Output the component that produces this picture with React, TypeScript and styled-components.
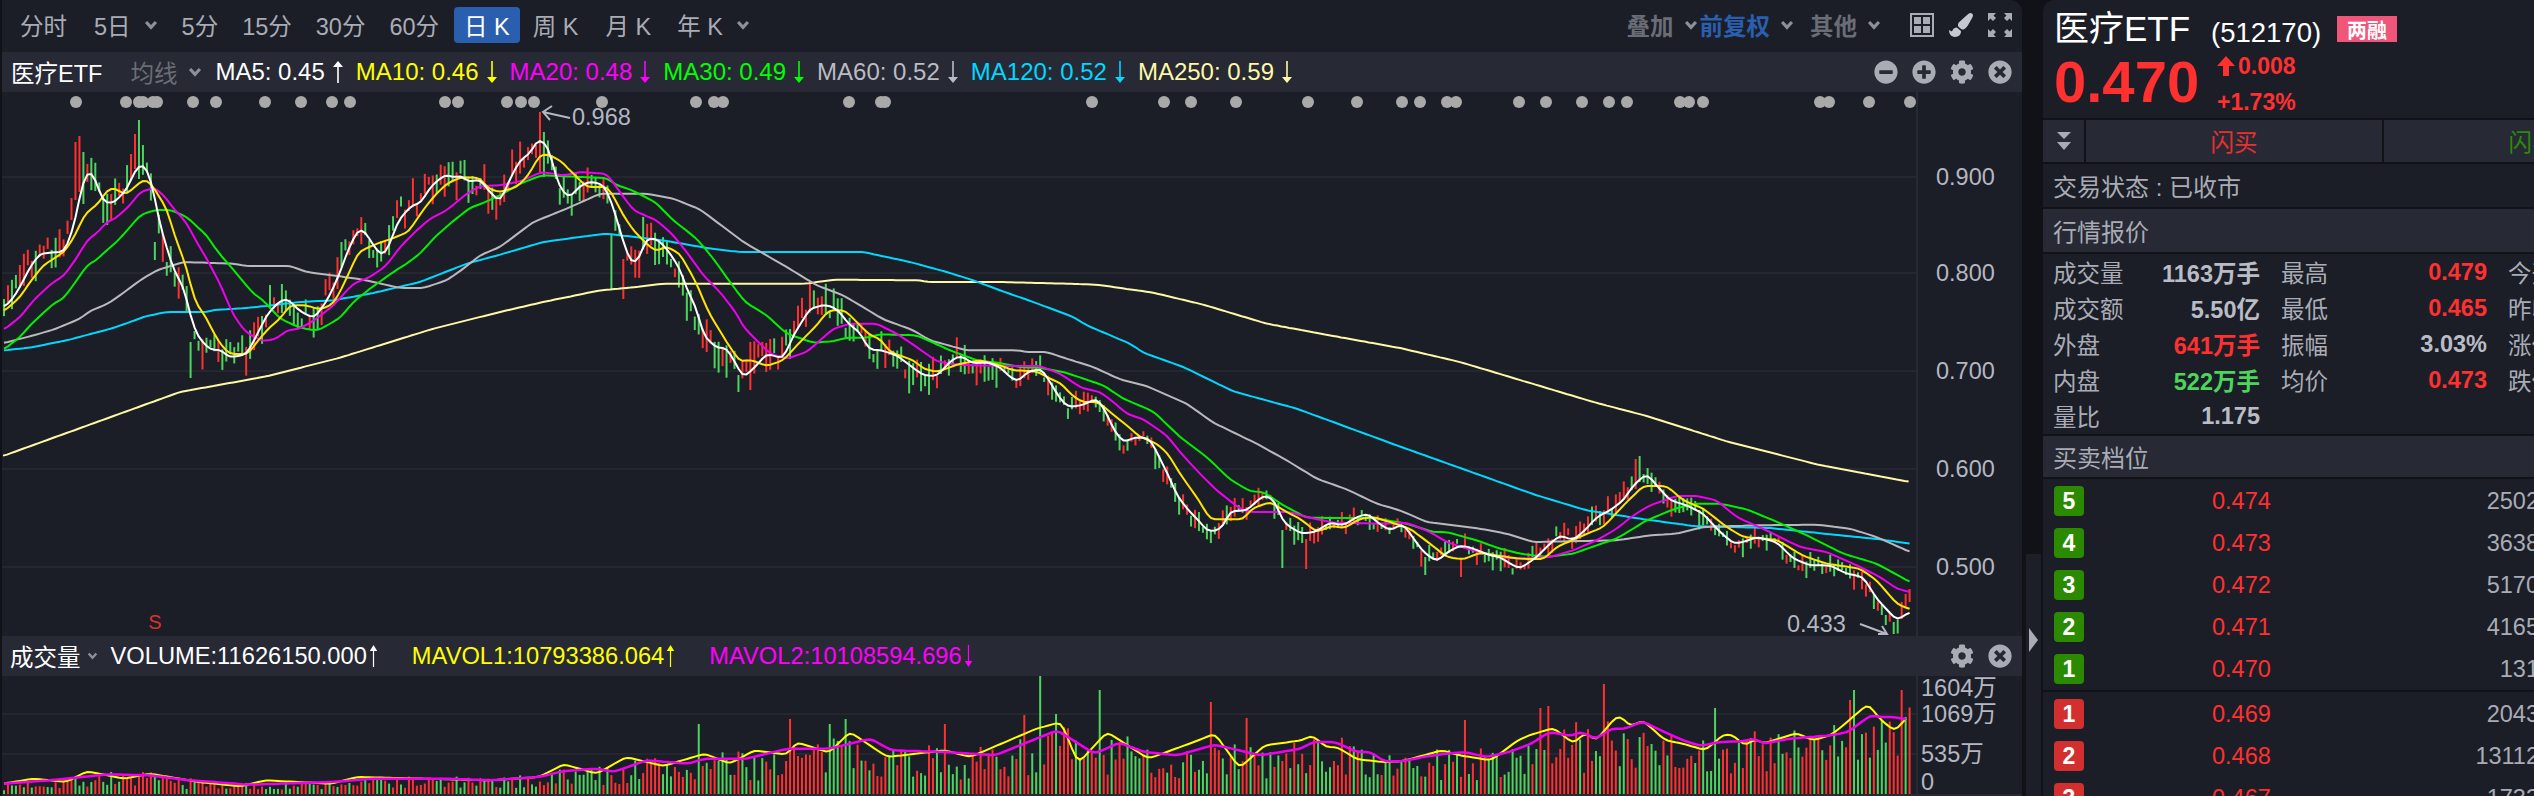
import React from 'react';
import styled, {createGlobalStyle} from 'styled-components';
import {FaCog, FaMinusCircle, FaPaintBrush, FaPlusCircle, FaTimesCircle} from 'react-icons/fa';

type Pt = [number, number];

const RED = '#ff3030';
const GREEN = '#4cd45c';
const MUTED = '#a9acb5';
const PANEL = '#1b1e27';
const BAR = '#272934';
const STEP = 3.97;

// traced from the reference, one list of points per crop of the chart
const cropA = (p: number[]) => toPts(p, (x) => x / 3, (y) => 90 + y / 3, 0, 500);
const cropB = (p: number[]) => toPts(p, (x) => 500 + x / 3, (y) => 90 + y / 3, 500, 1000);
const cropC = (p: number[]) => toPts(p, (x) => 1000 + x / 3, (y) => 280 + y / 3, 1000, 1500);
const cropD = (p: number[]) => toPts(p, (x) => 1450 + x / 3, (y) => 400 + y / 3, 1500, 1920);
const cropV = (p: number[]) => toPts(p, (x) => x / 1.206, (y) => 560 + y / 3, 0, 1300);
const cropW = (p: number[]) => toPts(p, (x) => 1250 + x / 2.24, (y) => 670 + y / 3, 1300, 1920);

function toPts(p: number[], fx: (n: number) => number, fy: (n: number) => number, from: number, to: number): Pt[] {
    const out: Pt[] = [];
    for (let i = 0; i < p.length; i += 2) {
        const x = fx(p[i]);
        if (x >= from && x < to) {
            out.push([x, fy(p[i + 1])]);
        }
    }
    return out;
}

function at(pts: Pt[], x: number): number {
    if (x <= pts[0][0]) {
        return pts[0][1];
    }
    for (let i = 1; i < pts.length; i++) {
        if (x <= pts[i][0]) {
            const [x0, y0] = pts[i - 1];
            const [x1, y1] = pts[i];
            return y0 + ((y1 - y0) * (x - x0)) / (x1 - x0);
        }
    }
    return pts[pts.length - 1][1];
}

function smooth(pts: Pt[]): string {
    const start = pts[0][0];
    const end = pts[pts.length - 1][0];
    const out: string[] = [];
    for (let x = start; x <= end; x += STEP) {
        const y = (at(pts, x - STEP) + at(pts, x) * 2 + at(pts, x + STEP)) / 4;
        out.push(`${x.toFixed(1)},${y.toFixed(1)}`);
    }
    return out.join(' ');
}

const ma5: Pt[] = [
    ...cropA([12, 645, 35, 625, 60, 585, 90, 525, 120, 485, 170, 480, 195, 480, 225, 390, 245, 280, 262, 240, 282, 245, 305, 325, 335, 335, 355, 320, 385, 285, 405, 235, 425, 215, 445, 235, 465, 320, 480, 400, 510, 500, 535, 565, 550, 575, 565, 650, 590, 730, 630, 773, 665, 773, 685, 797, 740, 787, 770, 730, 800, 670, 830, 635, 860, 618, 900, 658, 940, 678, 965, 650, 995, 600, 1020, 540, 1050, 460, 1075, 412, 1090, 412, 1140, 490, 1160, 480, 1195, 385, 1235, 340, 1260, 335, 1295, 280, 1340, 245, 1360, 258, 1385, 250, 1405, 270, 1440, 262, 1465, 295]),
    ...cropB([0, 330, 30, 260, 60, 205, 90, 185, 115, 138, 145, 165, 175, 280, 208, 320, 235, 285, 270, 268, 310, 278, 335, 330, 355, 400, 380, 480, 395, 515, 420, 500, 435, 440, 470, 440, 500, 470, 540, 530, 560, 590, 590, 650, 610, 730, 650, 768, 680, 768, 710, 820, 730, 858, 770, 820, 800, 785, 850, 800, 880, 730, 930, 650, 975, 638, 1010, 650, 1050, 700, 1080, 720, 1105, 772, 1145, 775, 1190, 790, 1230, 820, 1270, 850, 1310, 852, 1360, 800, 1385, 792, 1420, 815, 1460, 810]),
    ...cropC([0, 255, 30, 285, 55, 300, 80, 270, 125, 260, 150, 300, 180, 350, 205, 375, 245, 370, 290, 350, 310, 375, 345, 450, 370, 480, 410, 465, 450, 470, 480, 530, 510, 590, 530, 640, 570, 690, 600, 720, 625, 750, 665, 740, 690, 688, 740, 685, 790, 640, 820, 650, 850, 720, 870, 735, 905, 755, 945, 750, 990, 722, 1030, 730, 1070, 705, 1105, 695, 1130, 720, 1170, 745, 1210, 725, 1230, 755, 1270, 810, 1310, 838, 1350, 805, 1385, 790, 1420, 800, 1470, 820]),
    ...cropD([150, 465, 180, 485, 210, 500, 260, 465, 300, 425, 330, 400, 370, 415, 410, 380, 440, 345, 480, 325, 520, 295, 550, 250, 590, 215, 620, 250, 660, 295, 710, 310, 760, 335, 800, 380, 850, 425, 880, 420, 920, 405, 980, 420, 1030, 470, 1080, 490, 1140, 490, 1190, 515, 1240, 525, 1280, 590, 1340, 655, 1380, 630]),
];

const ma10: Pt[] = [
    ...cropA([12, 658, 60, 615, 90, 570, 130, 520, 195, 478, 225, 430, 255, 365, 295, 335, 320, 295, 345, 288, 375, 310, 410, 280, 430, 263, 450, 270, 500, 350, 530, 450, 555, 510, 585, 630, 615, 670, 650, 740, 685, 785, 745, 787, 770, 750, 810, 705, 840, 680, 870, 640, 920, 640, 960, 653, 1000, 635, 1030, 580, 1075, 480, 1130, 455, 1170, 442, 1225, 420, 1265, 360, 1300, 315, 1340, 275, 1385, 255, 1440, 258, 1465, 290]),
    ...cropB([0, 300, 50, 285, 85, 250, 120, 188, 145, 188, 180, 205, 225, 250, 260, 285, 325, 285, 370, 370, 400, 415, 440, 455, 470, 480, 495, 462, 540, 485, 590, 575, 625, 660, 680, 750, 720, 810, 750, 803, 800, 822, 850, 805, 900, 750, 950, 700, 985, 655, 1035, 655, 1070, 690, 1110, 730, 1140, 740, 1170, 780, 1240, 805, 1270, 830, 1310, 840, 1380, 815, 1440, 805]),
    ...cropC([0, 250, 40, 265, 110, 268, 150, 290, 185, 305, 210, 335, 245, 360, 295, 360, 330, 390, 380, 430, 420, 465, 465, 482, 500, 510, 540, 575, 600, 660, 630, 712, 730, 712, 755, 680, 810, 660, 860, 690, 900, 710, 950, 750, 1000, 730, 1030, 740, 1080, 710, 1120, 705, 1170, 720, 1230, 740, 1290, 785, 1340, 825, 1390, 832, 1440, 812]),
    ...cropD([150, 462, 210, 470, 280, 472, 320, 435, 400, 400, 460, 375, 530, 300, 580, 252, 650, 252, 700, 295, 760, 320, 830, 375, 880, 405, 980, 413, 1060, 462, 1130, 485, 1230, 500, 1280, 535, 1340, 605, 1380, 622]),
];

const ma20: Pt[] = [
    ...cropA([12, 713, 60, 675, 105, 620, 160, 570, 190, 553, 225, 505, 265, 440, 290, 425, 320, 390, 345, 380, 390, 340, 420, 300, 465, 287, 500, 320, 520, 350, 555, 385, 590, 450, 620, 500, 660, 575, 700, 670, 740, 723, 790, 748, 830, 740, 860, 715, 900, 710, 950, 680, 1000, 640, 1060, 575, 1110, 555, 1160, 520, 1200, 465, 1250, 415, 1290, 380, 1340, 355, 1400, 305, 1440, 282]),
    ...cropB([0, 280, 60, 268, 125, 240, 190, 250, 240, 240, 320, 245, 360, 300, 400, 355, 470, 385, 520, 430, 560, 480, 610, 550, 660, 600, 710, 665, 730, 705, 770, 745, 810, 785, 860, 800, 920, 780, 960, 745, 1000, 710, 1050, 695, 1130, 695, 1190, 725, 1250, 765, 1310, 808, 1370, 818]),
    ...cropC([0, 252, 120, 252, 180, 275, 245, 318, 300, 330, 340, 360, 380, 395, 430, 412, 500, 460, 540, 510, 590, 565, 650, 625, 720, 680, 750, 690, 870, 690, 920, 705, 1000, 722, 1150, 725, 1220, 722, 1290, 750, 1340, 780, 1400, 800]),
    ...cropD([150, 465, 210, 470, 300, 465, 370, 445, 440, 415, 500, 380, 550, 340, 600, 310, 680, 282, 740, 282, 800, 295, 860, 345, 960, 390, 1050, 435, 1130, 450, 1220, 490, 1290, 525, 1340, 560, 1380, 570]),
];

const ma30: Pt[] = [
    ...cropA([12, 772, 60, 735, 90, 700, 160, 635, 190, 620, 230, 565, 265, 515, 285, 508, 320, 475, 350, 450, 390, 405, 420, 370, 460, 355, 510, 353, 560, 375, 620, 430, 650, 475, 710, 545, 760, 605, 790, 625, 840, 680, 890, 703, 925, 713, 955, 715, 1020, 678, 1060, 630, 1110, 590, 1180, 540, 1220, 515, 1260, 485, 1300, 440, 1350, 395, 1410, 347, 1440, 337]),
    ...cropB([0, 310, 60, 275, 125, 250, 320, 258, 350, 280, 390, 292, 465, 330, 520, 385, 590, 440, 640, 500, 690, 570, 735, 630, 800, 670, 860, 725, 940, 752, 1000, 748, 1040, 737, 1100, 737, 1140, 727, 1250, 730, 1350, 775, 1430, 805]),
    ...cropC([0, 243, 60, 255, 125, 258, 190, 270, 230, 283, 280, 300, 310, 310, 370, 350, 460, 388, 540, 465, 620, 525, 690, 592, 750, 628, 790, 630, 850, 670, 920, 707, 1010, 708, 1120, 708, 1220, 725, 1300, 750, 1340, 750, 1430, 775]),
    ...cropD([150, 440, 210, 455, 290, 465, 370, 455, 440, 430, 500, 410, 590, 355, 680, 318, 740, 305, 810, 305, 890, 322, 970, 355, 1060, 395, 1180, 455, 1280, 485, 1380, 540]),
];

const ma60: Pt[] = [
    ...cropA([12, 753, 90, 733, 160, 713, 240, 680, 270, 657, 320, 637, 360, 610, 420, 565, 470, 535, 550, 510, 700, 515, 740, 522, 870, 522, 920, 540, 960, 545, 1090, 563, 1200, 588, 1270, 588, 1340, 565, 1390, 530, 1440, 490]),
    ...cropB([0, 465, 100, 390, 200, 350, 300, 305, 440, 305, 520, 320, 600, 352, 730, 450, 860, 525, 950, 580, 1030, 610, 1150, 682, 1240, 715, 1290, 745, 1400, 775]),
    ...cropC([0, 205, 60, 205, 70, 210, 140, 210, 200, 230, 280, 255, 360, 292, 440, 312, 560, 365, 640, 422, 770, 485, 860, 535, 950, 590, 1040, 622, 1130, 665, 1200, 685, 1280, 720, 1440, 740]),
    ...cropD([170, 395, 250, 420, 500, 415, 600, 400, 680, 395, 760, 375, 920, 370, 1100, 368, 1200, 380, 1280, 405, 1380, 450]),
];

const ma120: Pt[] = [
    ...cropA([12, 775, 90, 767, 200, 745, 340, 708, 440, 672, 500, 660, 620, 660, 640, 654, 750, 647, 900, 630, 1000, 625, 1120, 603, 1260, 570, 1400, 515]),
    ...cropB([0, 488, 130, 450, 240, 435, 320, 425, 420, 437, 500, 447, 620, 468, 720, 480, 1090, 480, 1230, 510, 1340, 540, 1420, 565]),
    ...cropC([0, 25, 100, 60, 220, 105, 260, 130, 390, 185, 430, 212, 550, 255, 700, 328, 890, 380, 1190, 490]),
    ...cropD([260, 280, 410, 325, 570, 350, 730, 372, 960, 378, 1170, 400, 1290, 412, 1380, 425]),
];

const ma250: Pt[] = [
    ...cropA([9, 1092, 540, 900, 800, 853, 1020, 797, 1300, 710]),
    ...cropB([0, 660, 130, 630, 300, 595, 410, 585, 490, 575, 920, 575, 1000, 563, 1260, 565, 1280, 570]),
    ...cropC([0, 0, 200, 5, 290, 8, 460, 32, 610, 68, 800, 125, 1000, 162, 1200, 198, 1380, 240]),
    ...cropD([430, 0, 590, 42, 830, 118, 1100, 187, 1380, 240]),
];

const maLines: {color: string; pts: Pt[]}[] = [
    {color: '#fff8a6', pts: ma250},
    {color: '#00d8ff', pts: ma120},
    {color: '#b9b9bd', pts: ma60},
    {color: '#00f000', pts: ma30},
    {color: '#f000f0', pts: ma20},
    {color: '#ffe600', pts: ma10},
    {color: '#ffffff', pts: ma5},
];

const volMa1: Pt[] = [
    ...cropV([5, 665, 40, 650, 80, 660, 105, 628, 150, 650, 180, 635, 240, 660, 290, 673, 320, 655, 400, 665, 430, 645, 590, 655, 650, 645, 680, 607, 720, 635, 755, 585, 800, 612, 850, 575, 880, 605, 910, 565, 950, 578, 960, 540, 1000, 572, 1025, 510, 1070, 585, 1140, 565, 1170, 585, 1250, 500, 1280, 480, 1300, 605, 1335, 510, 1385, 590, 1440, 540, 1465, 515, 1495, 618, 1525, 550, 1568, 545]),
    ...cropW([115, 205, 140, 190, 170, 225, 195, 225, 240, 262, 300, 270, 340, 268, 430, 235, 470, 250, 540, 265, 600, 205, 625, 190, 680, 168, 725, 215, 750, 182, 775, 205, 820, 135, 835, 135, 850, 165, 880, 145, 930, 205, 970, 215, 1020, 235, 1060, 188, 1080, 188, 1110, 222, 1130, 200, 1150, 215, 1225, 183, 1260, 205, 1300, 190, 1320, 170, 1385, 95, 1410, 140, 1445, 178, 1475, 130]),
];

const volMa2: Pt[] = [
    ...cropV([5, 665, 60, 655, 130, 637, 180, 640, 230, 655, 300, 668, 400, 660, 450, 650, 540, 650, 590, 655, 650, 645, 680, 627, 720, 620, 740, 630, 780, 595, 830, 605, 850, 590, 900, 590, 950, 560, 1000, 560, 1050, 530, 1075, 565, 1140, 570, 1200, 580, 1250, 530, 1275, 505, 1320, 575, 1350, 542, 1380, 570, 1420, 580, 1465, 548, 1520, 580, 1568, 565]),
    ...cropW([115, 230, 140, 210, 190, 210, 240, 240, 270, 240, 300, 268, 340, 268, 400, 252, 440, 245, 480, 240, 530, 255, 580, 240, 630, 215, 670, 180, 720, 192, 740, 180, 775, 200, 810, 170, 840, 170, 880, 148, 920, 175, 970, 205, 1010, 222, 1050, 210, 1100, 208, 1130, 200, 1150, 215, 1210, 200, 1300, 190, 1340, 180, 1390, 130, 1410, 135, 1440, 135, 1475, 143]),
];

function makeRandom(seed: number) {
    let s = seed;
    return () => {
        s = (s + 0x6d2b79f5) | 0;
        let t = Math.imul(s ^ (s >>> 15), 1 | s);
        t = (t + Math.imul(t ^ (t >>> 7), 61 | t)) ^ t;
        return ((t ^ (t >>> 14)) >>> 0) / 4294967296;
    };
}

interface Bar {
    x: number;
    top: number;
    bottom: number;
    up: boolean;
}

const priceSpikes: Bar[] = [
    {x: 70, top: 196, bottom: 218, up: true},
    {x: 76, top: 140, bottom: 198, up: true},
    {x: 80, top: 134, bottom: 190, up: true},
    {x: 84, top: 150, bottom: 202, up: false},
    {x: 130, top: 152, bottom: 177, up: true},
    {x: 134, top: 132, bottom: 167, up: true},
    {x: 138, top: 118, bottom: 177, up: false},
    {x: 156, top: 240, bottom: 258, up: false},
    {x: 192, top: 340, bottom: 376, up: false},
    {x: 538, top: 110, bottom: 170, up: true},
    {x: 542, top: 130, bottom: 175, up: false},
    {x: 613, top: 233, bottom: 288, up: false},
    {x: 624, top: 257, bottom: 297, up: true},
    {x: 739, top: 373, bottom: 390, up: false},
    {x: 750, top: 340, bottom: 388, up: true},
    {x: 1284, top: 528, bottom: 566, up: false},
    {x: 1306, top: 537, bottom: 567, up: true},
    {x: 1424, top: 555, bottom: 573, up: false},
    {x: 1460, top: 557, bottom: 575, up: true},
    {x: 1634, top: 457, bottom: 487, up: true},
    {x: 1640, top: 454, bottom: 480, up: false},
    {x: 1874, top: 592, bottom: 607, up: false},
    {x: 1882, top: 603, bottom: 613, up: false},
    {x: 1887, top: 613, bottom: 623, up: false},
    {x: 1892, top: 620, bottom: 632, up: false},
    {x: 1900, top: 600, bottom: 617, up: true},
    {x: 1904, top: 592, bottom: 605, up: true},
    {x: 1910, top: 587, bottom: 600, up: true},
];

const volumeSpikes: {x: number; top: number; up: boolean}[] = [
    {x: 699, top: 722, up: false},
    {x: 789, top: 717, up: true},
    {x: 829, top: 722, up: false},
    {x: 846, top: 717, up: false},
    {x: 945, top: 722, up: true},
    {x: 1024, top: 713, up: true},
    {x: 1042, top: 674, up: false},
    {x: 1057, top: 712, up: false},
    {x: 1100, top: 688, up: false},
    {x: 1212, top: 700, up: true},
    {x: 1248, top: 716, up: true},
    {x: 1463, top: 718, up: true},
    {x: 1539, top: 706, up: true},
    {x: 1549, top: 704, up: true},
    {x: 1604, top: 682, up: true},
    {x: 1716, top: 706, up: false},
    {x: 1850, top: 698, up: true},
    {x: 1856, top: 688, up: false},
    {x: 1900, top: 688, up: true},
];

function buildCandles(): Bar[] {
    const rnd = makeRandom(20);
    const bars: Bar[] = [];
    for (let x = 4; x < 1912; x += STEP) {
        const spike = priceSpikes.find((s) => Math.abs(s.x - x) < STEP / 2);
        if (spike) {
            bars.push({...spike, x});
            continue;
        }
        const slope = at(ma5, x + 10) - at(ma5, x - 10);
        const up = rnd() < (slope < 0 ? 0.7 : 0.28);
        const vol = x < 1000 ? 1 : 0.6;
        const len = (7 + rnd() * 26) * vol;
        const mid = at(ma5, x) + (rnd() - 0.5) * 22 * vol + slope * 0.15;
        bars.push({x, top: mid - len / 2, bottom: mid + len / 2, up});
    }
    return bars;
}

function buildVolume(): Bar[] {
    const rnd = makeRandom(7);
    const bars: Bar[] = [];
    for (let x = 4; x < 1912; x += STEP) {
        const spike = volumeSpikes.find((s) => Math.abs(s.x - x) < STEP / 2);
        if (spike) {
            bars.push({x, top: spike.top, bottom: 792, up: spike.up});
            continue;
        }
        const height = (792 - at(volMa2, x)) * (0.35 + rnd() * 0.85);
        bars.push({x, top: 792 - height, bottom: 792, up: rnd() > 0.5});
    }
    return bars;
}

const candles = buildCandles();
const volumeBars = buildVolume();

const signalDots = [76, 126, 139, 143, 153, 157, 193, 216, 265, 301, 332, 350, 445, 458, 507, 521, 534, 602, 696, 714, 723, 849, 881, 885, 1092, 1164, 1191, 1236, 1308, 1357, 1402, 1420, 1447, 1456, 1519, 1546, 1582, 1609, 1627, 1680, 1689, 1703, 1820, 1829, 1869, 1910];
const priceGrid = [{y: 175, label: '0.900'}, {y: 271, label: '0.800'}, {y: 369, label: '0.700'}, {y: 467, label: '0.600'}, {y: 565, label: '0.500'}];
const volumeAxis = [{y: 686, label: '1604万'}, {y: 712, label: '1069万'}, {y: 752, label: '535万'}, {y: 780, label: '0'}];

const GlobalStyle = createGlobalStyle`
    html, body {
        margin: 0;
        height: 100%;
        overflow: hidden;
        background: #111217;
    }
    body {
        font-family: "Liberation Sans", "Noto Sans CJK SC", sans-serif;
    }
`;

const Page = styled.div`
    display: flex;
    width: 2534px;
    height: 796px;
    overflow: hidden;
    padding-left: 2px;
    box-sizing: border-box;
`;

const ChartPanel = styled.section`
    flex: 0 0 2020px;
    display: flex;
    flex-direction: column;
    height: 796px;
    background: ${PANEL};
    border-top-right-radius: 12px;
    overflow: hidden;
`;

const Toolbar = styled.nav`
    flex: 0 0 50px;
    display: flex;
    align-items: center;
    padding: 0 10px 2px 18px;
    font-size: 23.5px;
    color: ${MUTED};
`;

const ToolItem = styled.span<{$active?: boolean; $tone?: string; $space?: number}>`
    display: inline-flex;
    align-items: center;
    justify-content: center;
    gap: ${(p) => (p.$tone ? 10 : 13)}px;
    height: 36px;
    padding: ${(p) => (p.$active ? '0 10px' : '0')};
    margin-right: ${(p) => p.$space ?? 24}px;
    border-radius: 4px;
    background: ${(p) => (p.$active ? '#2a5fb0' : 'transparent')};
    color: ${(p) => (p.$active ? '#ffffff' : p.$tone ?? MUTED)};
    white-space: pre;
    font-weight: ${(p) => (p.$tone ? 700 : 400)};
`;

const ToolSpacer = styled.span`
    flex: 1;
`;

const IconSlot = styled.span<{$space?: number; $color?: string}>`
    display: inline-flex;
    margin-right: ${(p) => p.$space ?? 15}px;
    color: ${(p) => p.$color ?? MUTED};
`;

const Legend = styled.div`
    flex: 0 0 40px;
    display: flex;
    align-items: center;
    padding: 0 10px 0 9px;
    background: ${BAR};
    font-size: 23.5px;
    white-space: pre;
`;

const LegendTitle = styled.span<{$space?: number; $inset?: number}>`
    color: #ffffff;
    margin-left: ${(p) => p.$inset ?? 0}px;
    margin-right: ${(p) => p.$space ?? 28}px;
`;

const LegendPick = styled.span<{$width: number}>`
    display: inline-flex;
    align-items: center;
    gap: 11px;
    width: ${(p) => p.$width}px;
    color: #6a6d76;
`;

const LegendValue = styled.span<{$color: string; $space: number; $size: number}>`
    display: inline-flex;
    align-items: center;
    color: ${(p) => p.$color};
    font-size: ${(p) => p.$size}px;
    margin-right: ${(p) => p.$space}px;
`;

const TrendMark = styled.svg<{$gap: number}>`
    flex: none;
    margin-left: ${(p) => p.$gap}px;
`;

const LegendTools = styled.span`
    display: inline-flex;
    align-items: center;
    gap: 14px;
    margin-left: auto;
    color: ${MUTED};
`;

const PriceChart = styled.svg`
    display: block;
    flex: 0 0 544px;
    width: 2020px;
    height: 544px;
`;

const VolumeChart = styled.svg`
    display: block;
    flex: 0 0 118px;
    width: 2020px;
    height: 118px;
`;

const AxisLabel = styled.text`
    fill: #b4b7c2;
    font-size: 23.5px;
    dominant-baseline: central;
`;

const SellMark = styled.text`
    fill: #d8332a;
    font-size: 20px;
    text-anchor: middle;
    dominant-baseline: central;
`;

const Footer = styled.div`
    flex: 1;
    background: ${BAR};
`;

const Rail = styled.div`
    flex: 0 0 21px;
    display: flex;
    flex-direction: column;
    padding: 554px 2px 0 4px;
    box-sizing: border-box;
`;

const RailHandle = styled.div`
    flex: 1;
    display: flex;
    align-items: center;
    justify-content: center;
    padding-bottom: 70px;
    background: #1c1f28;
    color: ${MUTED};
`;

const Quote = styled.aside`
    flex: 0 0 507px;
    width: 507px;
    min-width: 0;
    display: flex;
    flex-direction: column;
    gap: 2px;
    height: 796px;
`;

const QuoteHead = styled.header`
    flex: 0 0 118px;
    box-sizing: border-box;
    padding: 8px 0 0 11px;
    background: ${PANEL};
    border-top-left-radius: 12px;
`;

const NameRow = styled.div`
    display: flex;
    align-items: center;
    height: 42px;
    color: #ffffff;
`;

const Name = styled.span`
    font-size: 35px;
    width: 157px;
    margin-top: -8px;
`;

const Code = styled.span`
    font-size: 27.5px;
    width: 126px;
    margin-top: 7px;
`;

const Margin = styled.span`
    display: flex;
    align-items: center;
    justify-content: center;
    width: 60px;
    height: 26px;
    background: #f0557a;
    font-size: 20px;
    font-weight: 700;
`;

const PriceRow = styled.div`
    display: flex;
    align-items: center;
    color: ${RED};
    font-weight: 700;
`;

const Price = styled.span`
    font-size: 58px;
    width: 163px;
    line-height: 64px;
`;

const Change = styled.div`
    display: flex;
    flex-direction: column;
    gap: 12px;
    margin-top: 4px;
    font-size: 23px;
    line-height: 24px;
`;

const ChangeUp = styled.span`
    display: flex;
    align-items: center;
    gap: 3px;
`;

const TradeRow = styled.div`
    flex: 0 0 42px;
    display: flex;
    gap: 2px;
`;

const TradeCell = styled.div<{$color?: string; $narrow?: boolean}>`
    flex: 0 0 ${(p) => (p.$narrow ? 41 : 296)}px;
    display: flex;
    align-items: center;
    justify-content: center;
    background: ${BAR};
    color: ${(p) => p.$color ?? MUTED};
    font-size: 23.5px;
`;

const Status = styled.div`
    flex: 0 0 43px;
    display: flex;
    align-items: center;
    padding-left: 10px;
    background: ${PANEL};
    color: ${MUTED};
    font-size: 24px;
`;

const SectionBar = styled.div<{$height: number}>`
    flex: 0 0 ${(p) => p.$height}px;
    display: flex;
    align-items: center;
    padding-left: 10px;
    background: ${BAR};
    color: ${MUTED};
    font-size: 24px;
`;

const Stats = styled.div`
    flex: 0 0 180px;
    display: grid;
    grid-template-columns: 207px 206px 90px;
    grid-auto-rows: 36px;
    column-gap: 21px;
    padding-left: 10px;
    background: ${PANEL};
    font-size: 23.5px;
`;

const Stat = styled.div`
    display: flex;
    align-items: center;
    justify-content: space-between;
    color: ${MUTED};
    white-space: nowrap;
`;

const StatValue = styled.span<{$color?: string}>`
    color: ${(p) => p.$color ?? '#b9bcc5'};
    font-weight: 700;
`;

const Book = styled.div<{$height: number}>`
    flex: 0 0 ${(p) => p.$height}px;
    display: flex;
    flex-direction: column;
    padding-top: 1px;
    box-sizing: border-box;
    background: ${PANEL};
`;

const BookRow = styled.div`
    flex: 0 0 42px;
    display: flex;
    align-items: center;
    padding: 0 11px;
    font-size: 23.5px;
`;

const Level = styled.span<{$side: 'ask' | 'bid'}>`
    flex: 0 0 30px;
    height: 30px;
    display: flex;
    align-items: center;
    justify-content: center;
    border-radius: 4px;
    background: ${(p) => (p.$side === 'ask' ? '#2b8a00' : '#d32f2f')};
    color: #ffffff;
    font-weight: 700;
    font-size: 23px;
`;

const LevelPrice = styled.span`
    margin-left: 128px;
    color: ${RED};
`;

const LevelVolume = styled.span`
    margin-left: auto;
    color: ${MUTED};
`;

const Chevron = ({size = 14}: {size?: number}) => (
    <svg
        width={size}
        height={size * 0.7}
        viewBox='0 0 14 10'
    >
        <path
            d='M2 2L7 7.500L12 2'
            fill='none'
            stroke='#8d9099'
            strokeWidth='3.200'
        />
    </svg>
);

const Trend = ({dir, gap, width = 12}: {dir: 'up' | 'down'; gap: number; width?: number}) => (
    <TrendMark
        $gap={gap}
        width={width}
        height='22'
        viewBox='0 0 12 22'
        preserveAspectRatio='none'
    >
        <path
            d={dir === 'up' ? 'M5.200 22V6H1L6 0L11 6H6.800V22z' : 'M5.200 0V16H1L6 22L11 16H6.800V0z'}
            fill='currentColor'
        />
    </TrendMark>
);

const GridIcon = () => (
    <svg
        width='24'
        height='24'
        viewBox='0 0 24 24'
    >
        <rect
            x='1'
            y='1'
            width='22'
            height='22'
            fill='none'
            stroke={MUTED}
            strokeWidth='2'
        />
        <path
            d='M4 4h7v7H4zM13 4h7v7h-7zM4 13h7v7H4zM13 13h7v7h-7z'
            fill={MUTED}
        />
    </svg>
);

const ExpandIcon = () => (
    <svg
        width='24'
        height='24'
        viewBox='0 0 24 24'
        fill={MUTED}
    >
        <path d='M0 0h8L5.500 2.500 8 5 5 8 2.500 5.500 0 8zM24 0h-8l2.500 2.500L16 5l3 3 2.500-2.500L24 8zM0 24h8l-2.500-2.500L8 19l-3-3-2.500 2.500L0 16zM24 24h-8l2.500-2.500L16 19l3-3 2.500 2.500L24 16z'/>
    </svg>
);

const tabs: {label: string; menu?: boolean; active?: boolean; space?: number}[] = [
    {label: '分时', space: 27},
    {label: '5日', menu: true},
    {label: '5分'},
    {label: '15分'},
    {label: '30分'},
    {label: '60分', space: 15},
    {label: '日 K', active: true, space: 13},
    {label: '周 K', space: 27},
    {label: '月 K', space: 26},
    {label: '年 K', menu: true},
];

const averages: {label: string; color: string; dir: 'up' | 'down'}[] = [
    {label: 'MA5: 0.45', color: '#ffffff', dir: 'up'},
    {label: 'MA10: 0.46', color: '#ffff00', dir: 'down'},
    {label: 'MA20: 0.48', color: '#ff00ff', dir: 'down'},
    {label: 'MA30: 0.49', color: '#00ff00', dir: 'down'},
    {label: 'MA60: 0.52', color: '#b9bcc5', dir: 'down'},
    {label: 'MA120: 0.52', color: '#00d8ff', dir: 'down'},
    {label: 'MA250: 0.59', color: '#fff8a6', dir: 'down'},
];

const volumeAverages: {label: string; color: string; dir: 'up' | 'down'}[] = [
    {label: 'VOLUME:11626150.000', color: '#ffffff', dir: 'up'},
    {label: 'MAVOL1:10793386.064', color: '#ffff00', dir: 'up'},
    {label: 'MAVOL2:10108594.696', color: '#ff00ff', dir: 'down'},
];

const stats: {label: string; value?: string; color?: string}[][] = [
    [{label: '成交量', value: '1163万手'}, {label: '最高', value: '0.479', color: RED}, {label: '今开'}],
    [{label: '成交额', value: '5.50亿'}, {label: '最低', value: '0.465', color: RED}, {label: '昨收'}],
    [{label: '外盘', value: '641万手', color: RED}, {label: '振幅', value: '3.03%'}, {label: '涨停'}],
    [{label: '内盘', value: '522万手', color: GREEN}, {label: '均价', value: '0.473', color: RED}, {label: '跌停'}],
    [{label: '量比', value: '1.175'}],
];

const asks = [
    {level: 5, price: '0.474', volume: '2502'},
    {level: 4, price: '0.473', volume: '3638'},
    {level: 3, price: '0.472', volume: '5170'},
    {level: 2, price: '0.471', volume: '4165'},
    {level: 1, price: '0.470', volume: '131'},
];

const bids = [
    {level: 1, price: '0.469', volume: '2043'},
    {level: 2, price: '0.468', volume: '13112'},
    {level: 3, price: '0.467', volume: '1733'},
];

const App = () => (
    <Page>
        <GlobalStyle/>
        <ChartPanel>
            <Toolbar>
                {tabs.map((tab) => (
                    <ToolItem
                        key={tab.label}
                        $active={tab.active}
                        $space={tab.space}
                    >
                        {tab.label}
                        {tab.menu && <Chevron/>}
                    </ToolItem>
                ))}
                <ToolSpacer/>
                <ToolItem
                    $tone='#6a6d76'
                    $space={2}
                >
                    {'叠加'}
                    <Chevron/>
                </ToolItem>
                <ToolItem
                    $tone='#2a5fb0'
                    $space={16}
                >
                    {'前复权'}
                    <Chevron/>
                </ToolItem>
                <ToolItem
                    $tone='#6a6d76'
                    $space={29}
                >
                    {'其他'}
                    <Chevron/>
                </ToolItem>
                <IconSlot><GridIcon/></IconSlot>
                <IconSlot $color='#c5c8d2'><FaPaintBrush size={24}/></IconSlot>
                <IconSlot $space={0}><ExpandIcon/></IconSlot>
            </Toolbar>
            <Legend>
                <LegendTitle>{'医疗ETF'}</LegendTitle>
                <LegendPick $width={85}>
                    {'均线'}
                    <Chevron/>
                </LegendPick>
                {averages.map((item) => (
                    <LegendValue
                        key={item.label}
                        $color={item.color}
                        $space={12}
                        $size={24}
                    >
                        {item.label}
                        <Trend
                            dir={item.dir}
                            gap={7}
                        />
                    </LegendValue>
                ))}
                <LegendTools>
                    <FaMinusCircle size={24}/>
                    <FaPlusCircle size={24}/>
                    <FaCog size={24}/>
                    <FaTimesCircle size={24}/>
                </LegendTools>
            </Legend>
            <PriceChart viewBox='2 90 2020 544'>
                {priceGrid.map((row) => (
                    <line
                        key={row.y}
                        x1='2'
                        x2='1917'
                        y1={row.y}
                        y2={row.y}
                        stroke='#24272f'
                        strokeWidth='2'
                    />
                ))}
                <line
                    x1='1917'
                    x2='1917'
                    y1='90'
                    y2='634'
                    stroke={BAR}
                    strokeWidth='2'
                />
                {signalDots.map((x) => (
                    <circle
                        key={x}
                        cx={x}
                        cy='100'
                        r='6'
                        fill='#a9a9a9'
                    />
                ))}
                {candles.map((bar) => (
                    <rect
                        key={bar.x}
                        x={bar.x - 1}
                        y={bar.top}
                        width='2'
                        height={bar.bottom - bar.top}
                        fill={bar.up ? RED : GREEN}
                    />
                ))}
                {maLines.map((line) => (
                    <polyline
                        key={line.color}
                        points={smooth(line.pts)}
                        fill='none'
                        stroke={line.color}
                        strokeWidth='2'
                    />
                ))}
                <path
                    d='M570 116L543 110M552 104L543 110L550 118'
                    fill='none'
                    stroke='#b4b7c2'
                    strokeWidth='2'
                />
                <AxisLabel
                    x='572'
                    y='115'
                >
                    {'0.968'}
                </AxisLabel>
                <AxisLabel
                    x='1787'
                    y='622'
                >
                    {'0.433'}
                </AxisLabel>
                <path
                    d='M1860 622L1887 632M1878 632L1887 632L1882 624'
                    fill='none'
                    stroke='#b4b7c2'
                    strokeWidth='2'
                />
                <SellMark
                    x='155'
                    y='620'
                >
                    {'S'}
                </SellMark>
                {priceGrid.map((row) => (
                    <AxisLabel
                        key={row.label}
                        x='1936'
                        y={row.y}
                    >
                        {row.label}
                    </AxisLabel>
                ))}
            </PriceChart>
            <Legend>
                <LegendTitle
                    $inset={-1}
                    $space={6}
                >
                    {'成交量'}
                </LegendTitle>
                <LegendPick $width={24}><Chevron size={11}/></LegendPick>
                {volumeAverages.map((item) => (
                    <LegendValue
                        key={item.label}
                        $color={item.color}
                        $space={34}
                        $size={23.7}
                    >
                        {item.label}
                        <Trend
                            dir={item.dir}
                            gap={2}
                            width={9}
                        />
                    </LegendValue>
                ))}
                <LegendTools>
                    <FaCog size={24}/>
                    <FaTimesCircle size={24}/>
                </LegendTools>
            </Legend>
            <VolumeChart viewBox='2 674 2020 118'>
                {[712, 752].map((y) => (
                    <line
                        key={y}
                        x1='2'
                        x2='1917'
                        y1={y}
                        y2={y}
                        stroke='#24272f'
                        strokeWidth='2'
                    />
                ))}
                <line
                    x1='1917'
                    x2='1917'
                    y1='674'
                    y2='792'
                    stroke={BAR}
                    strokeWidth='2'
                />
                {volumeBars.map((bar) => (
                    <rect
                        key={bar.x}
                        x={bar.x - 1}
                        y={bar.top}
                        width='2'
                        height={bar.bottom - bar.top}
                        fill={bar.up ? RED : GREEN}
                    />
                ))}
                <polyline
                    points={smooth(volMa1)}
                    fill='none'
                    stroke='#ffff00'
                    strokeWidth='2'
                />
                <polyline
                    points={smooth(volMa2)}
                    fill='none'
                    stroke='#f000f0'
                    strokeWidth='2.500'
                />
                {volumeAxis.map((row) => (
                    <AxisLabel
                        key={row.label}
                        x='1921'
                        y={row.y}
                    >
                        {row.label}
                    </AxisLabel>
                ))}
            </VolumeChart>
            <Footer/>
        </ChartPanel>
        <Rail>
            <RailHandle>
                <svg
                    width='9'
                    height='24'
                    viewBox='0 0 9 24'
                >
                    <path
                        d='M0 0L9 12L0 24z'
                        fill={MUTED}
                    />
                </svg>
            </RailHandle>
        </Rail>
        <Quote>
            <QuoteHead>
                <NameRow>
                    <Name>{'医疗ETF'}</Name>
                    <Code>{'(512170)'}</Code>
                    <Margin>{'两融'}</Margin>
                </NameRow>
                <PriceRow>
                    <Price>{'0.470'}</Price>
                    <Change>
                        <ChangeUp>
                            <svg
                                width='18'
                                height='20'
                                viewBox='0 0 18 20'
                            >
                                <path
                                    d='M9 0L18 10H12V20H6V10H0z'
                                    fill={RED}
                                />
                            </svg>
                            {'0.008'}
                        </ChangeUp>
                        <span>{'+1.73%'}</span>
                    </Change>
                </PriceRow>
            </QuoteHead>
            <TradeRow>
                <TradeCell $narrow={true}>
                    <svg
                        width='14'
                        height='18'
                        viewBox='0 0 14 18'
                    >
                        <path
                            d='M0 0H14L7 7zM0 10H14L7 18z'
                            fill={MUTED}
                        />
                    </svg>
                </TradeCell>
                <TradeCell $color='#e83030'>{'闪买'}</TradeCell>
                <TradeCell $color='#2a8a0e'>{'闪卖'}</TradeCell>
            </TradeRow>
            <Status>{'交易状态 : 已收市'}</Status>
            <SectionBar $height={43}>{'行情报价'}</SectionBar>
            <Stats>
                {stats.flat().map((stat) => (
                    <Stat key={stat.label}>
                        {stat.label}
                        {stat.value && <StatValue $color={stat.color}>{stat.value}</StatValue>}
                    </Stat>
                ))}
            </Stats>
            <SectionBar $height={41}>{'买卖档位'}</SectionBar>
            <Book $height={208}>
                {asks.map((row) => (
                    <BookRow key={row.level}>
                        <Level $side='ask'>{row.level}</Level>
                        <LevelPrice>{row.price}</LevelPrice>
                        <LevelVolume>{row.volume}</LevelVolume>
                    </BookRow>
                ))}
            </Book>
            <Book $height={120}>
                {bids.map((row) => (
                    <BookRow key={row.level}>
                        <Level $side='bid'>{row.level}</Level>
                        <LevelPrice>{row.price}</LevelPrice>
                        <LevelVolume>{row.volume}</LevelVolume>
                    </BookRow>
                ))}
            </Book>
        </Quote>
    </Page>
);

export default App;
